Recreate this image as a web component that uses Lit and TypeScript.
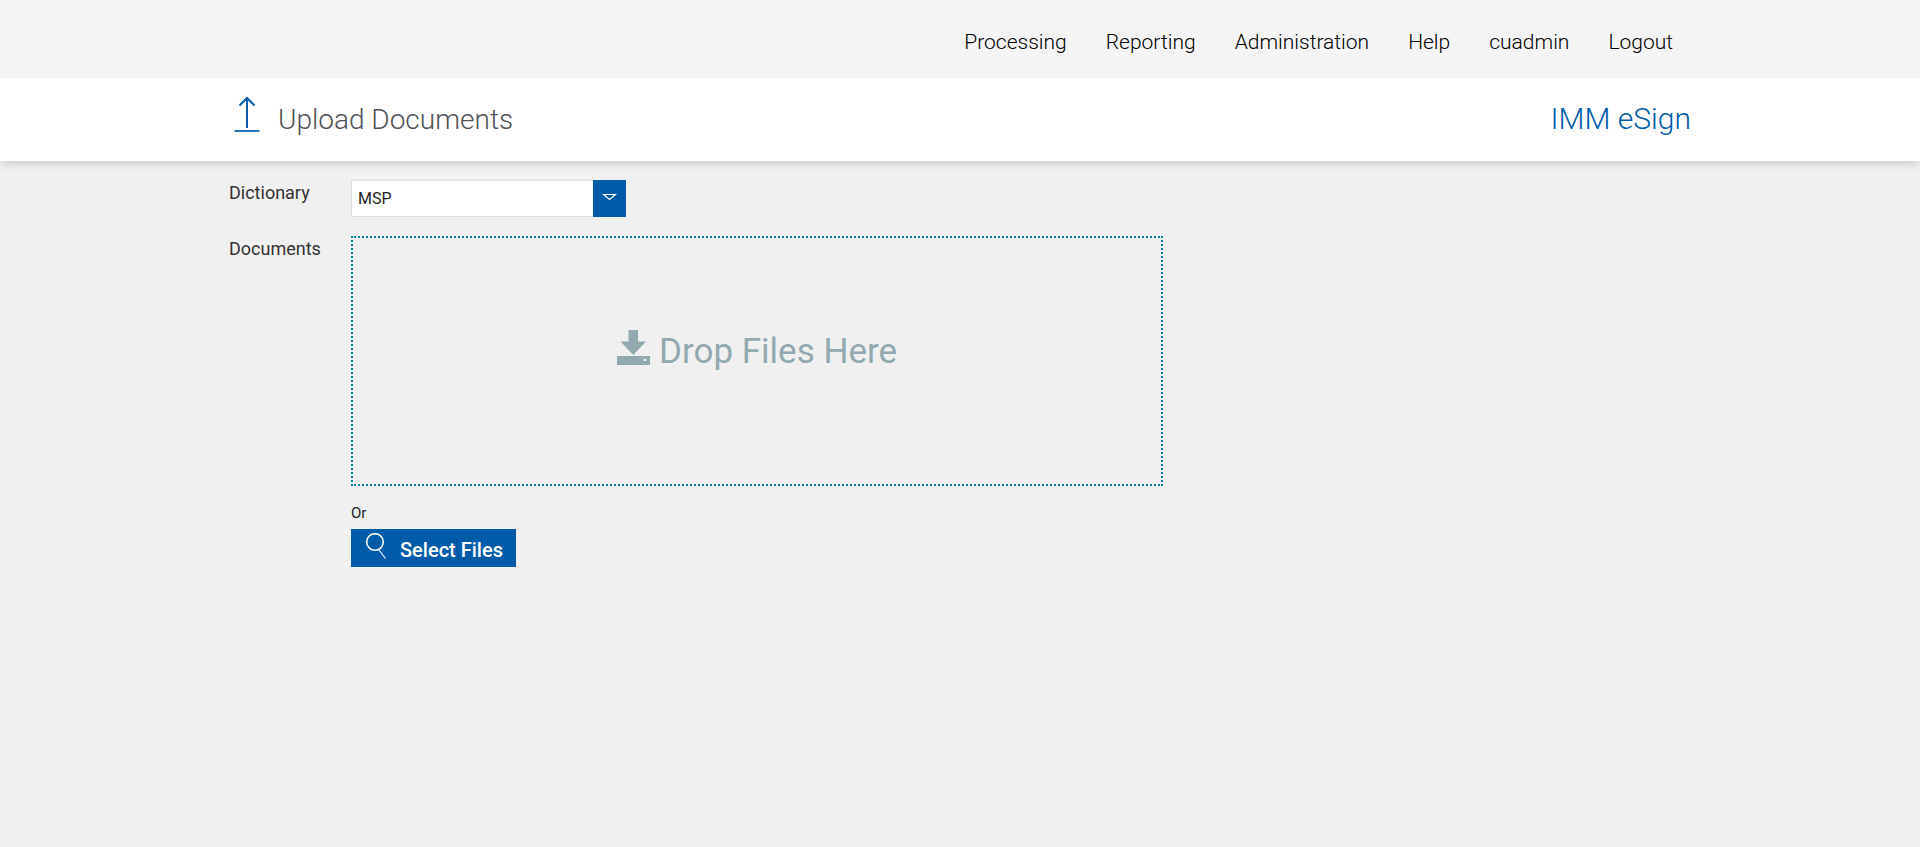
import { LitElement, html, css } from "lit";
import { customElement, state } from "lit/decorators.js";

const NAV_ITEMS = ["Processing", "Reporting", "Administration", "Help", "cuadmin", "Logout"];

@customElement("app-root")
export class AppRoot extends LitElement {
  @state() private dictionary = "MSP";

  static styles = css`
    :host {
      display: block;
      min-height: 100vh;
      background: #f0f0f0;
      color: #333;
      font-family: Roboto, "Liberation Sans", sans-serif;
      font-size: 16px;
    }
    .wrap {
      box-sizing: border-box;
      max-width: 1462px;
      margin: 0 auto;
    }
    .topbar {
      background: #f4f4f4;
    }
    .nav {
      display: flex;
      flex-wrap: wrap;
      justify-content: flex-end;
      gap: 39px;
      padding: 29px 18px 23px;
    }
    .nav-link {
      color: #000;
      font-size: 21px;
      line-height: 26px;
      font-weight: 300;
      text-decoration: none;
    }
    .titlebar {
      background: #fff;
      box-shadow: 0 5px 8px -2px rgba(0, 0, 0, 0.15);
    }
    .titlebar-inner {
      display: flex;
      justify-content: space-between;
      align-items: center;
      min-height: 83px;
    }
    .title {
      display: flex;
      align-items: flex-start;
      gap: 18px;
      margin: 0;
      color: #505257;
      font-size: 28px;
      line-height: 48px;
      font-weight: 300;
    }
    .title-icon {
      width: 26px;
      height: 36px;
      margin-left: 5px;
    }
    .brand {
      padding-bottom: 2px;
      color: #005ca9;
      font-size: 30px;
      line-height: 40px;
      font-weight: 300;
    }
    .form {
      display: grid;
      grid-template-columns: 122px minmax(0, 812px);
      row-gap: 19px;
      padding-top: 19px;
    }
    .label {
      font-size: 18px;
      line-height: 26px;
    }
    .select-box {
      display: grid;
      grid-template-columns: 1fr 33px;
      width: 275px;
      height: 37px;
    }
    .select {
      grid-area: 1 / 1 / 2 / 3;
      appearance: none;
      box-sizing: border-box;
      margin: 0;
      padding: 0 40px 0 6px;
      border: 1px solid #dedede;
      border-radius: 0;
      background: #fff;
      color: #222;
      font: 16px/20px Roboto, "Liberation Sans", sans-serif;
    }
    .select-arrow {
      grid-area: 1 / 2 / 2 / 3;
      display: flex;
      justify-content: center;
      align-items: center;
      background: #005ca9;
      pointer-events: none;
      z-index: 1;
    }
    .arrow-icon {
      width: 15px;
      height: 9px;
      margin-bottom: 2px;
    }
    .dropzone {
      box-sizing: border-box;
      display: flex;
      justify-content: center;
      align-items: center;
      min-height: 250px;
      padding-bottom: 18px;
      border: 2px dotted #00829b;
      color: #93a9b0;
      font-size: 35px;
      line-height: 44px;
    }
    .drop-icon {
      width: 33px;
      height: 35px;
      margin: 0 9px 10px 0;
    }
    .or {
      margin: 17px 0 6px;
      color: #222;
      font-size: 15px;
      line-height: 20px;
    }
    .select-files {
      display: flex;
      align-items: flex-start;
      gap: 12px;
      height: 38px;
      padding: 4px 13px 0 14px;
      border: 0;
      background: #005ca9;
      color: #fff;
      font: 500 20px/34px Roboto, "Liberation Sans", sans-serif;
    }
    .search-icon {
      width: 23px;
      height: 26px;
    }
  `;

  private onDictionary(e: Event) {
    this.dictionary = (e.target as HTMLSelectElement).value;
  }

  render() {
    return html`
      <header class="topbar">
        <nav class="nav wrap">
          ${NAV_ITEMS.map((item) => html`<a class="nav-link" href="#">${item}</a>`)}
        </nav>
      </header>
      <section class="titlebar">
        <div class="titlebar-inner wrap">
          <h1 class="title">
            <svg class="title-icon" viewBox="0 0 26 36" fill="none" stroke="#005ca9" stroke-width="2" aria-hidden="true">
              <path d="M13 1.500V32M5.500 9.500L13 2L20.500 9.500" />
              <path d="M.5 35H25.500" stroke-width="1.700" />
            </svg>
            <span>Upload Documents</span>
          </h1>
          <span class="brand">IMM eSign</span>
        </div>
      </section>
      <main class="form wrap">
        <label class="label" for="dictionary">Dictionary</label>
        <div class="select-box">
          <select class="select" id="dictionary" .value=${this.dictionary} @change=${this.onDictionary}>
            <option value="MSP">MSP</option>
          </select>
          <span class="select-arrow">
            <svg class="arrow-icon" viewBox="0 0 15 9" fill="none" stroke="#fff" stroke-width="1.200" aria-hidden="true">
              <path d="M1.500 1.500H13.500L7.500 6.500Z" />
            </svg>
          </span>
        </div>
        <span class="label" id="documents">Documents</span>
        <div>
          <div class="dropzone" role="group" aria-labelledby="documents">
            <svg class="drop-icon" viewBox="0 0 33 35" fill="#93a9b0" aria-hidden="true">
              <path d="M11.500 0H21V11.500H29L16.300 25L3.500 11.500H11.500Z" />
              <path fill-rule="evenodd" d="M0 26H33V35H0ZM26.500 29V31H29.500V29Z" />
            </svg>
            <span>Drop Files Here</span>
          </div>
          <p class="or">Or</p>
          <button class="select-files" type="button">
            <svg class="search-icon" viewBox="0 0 23 26" fill="none" stroke="#fff" aria-hidden="true">
              <circle cx="10" cy="9" r="8.300" stroke-width="1.500" />
              <path d="M14 17L20.500 25.500" stroke-width="1.100" />
            </svg>
            <span>Select Files</span>
          </button>
        </div>
      </main>
    `;
  }
}
